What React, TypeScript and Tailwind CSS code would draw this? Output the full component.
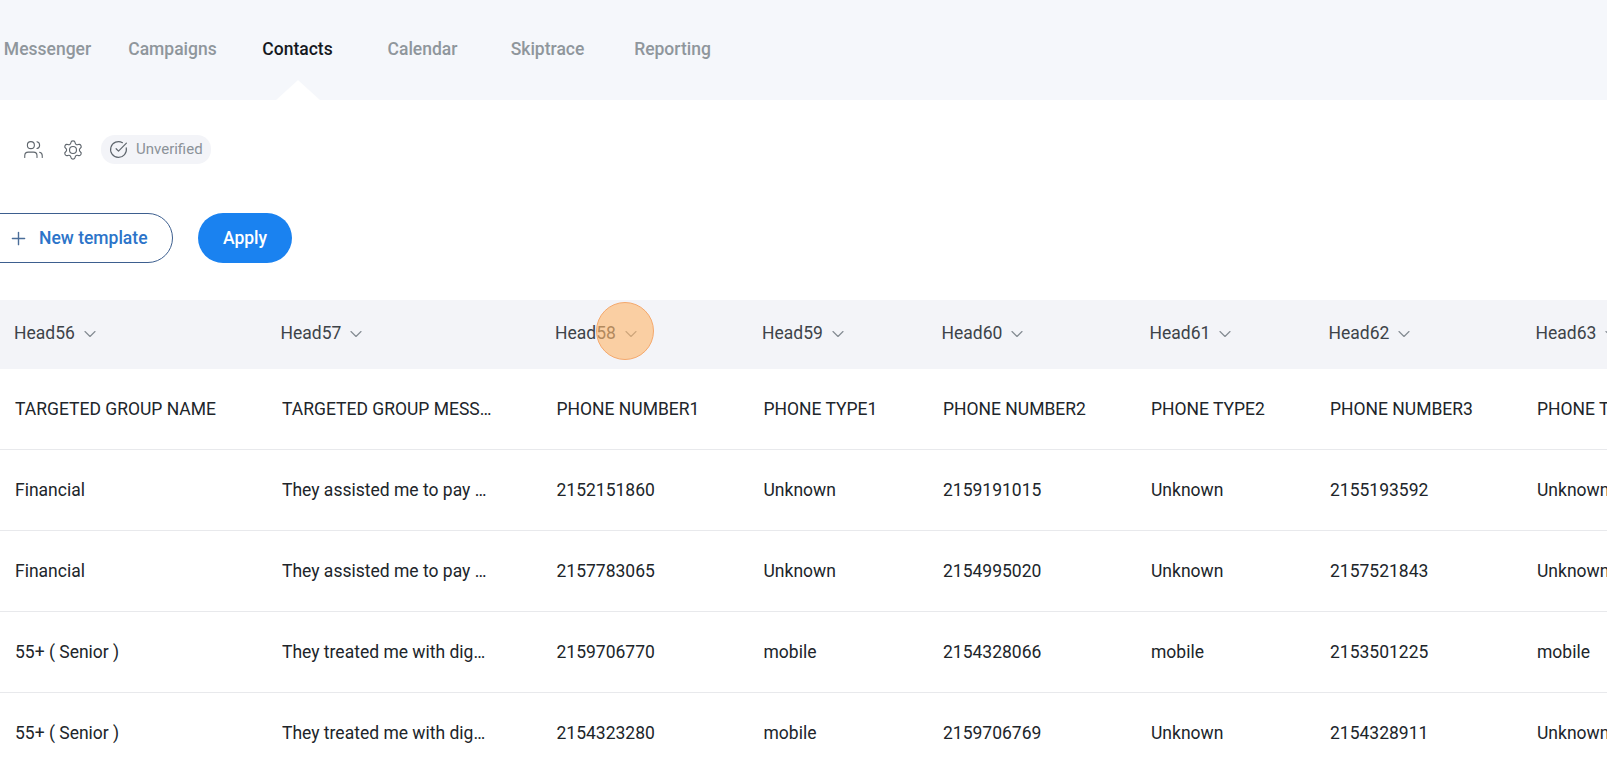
import { ChevronDown, CircleCheckBig, Plus, Users } from "lucide-react";

const navItems = ["Messenger", "Campaigns", "Contacts", "Calendar", "Skiptrace", "Reporting"];
const heads = ["Head56", "Head57", "Head58", "Head59", "Head60", "Head61", "Head62", "Head63"];
const rows = [
  ["TARGETED GROUP NAME", "TARGETED GROUP MESSAGE NAME", "PHONE NUMBER1", "PHONE TYPE1", "PHONE NUMBER2", "PHONE TYPE2", "PHONE NUMBER3", "PHONE TYPE3"],
  ["Financial", "They assisted me to pay off my debts", "2152151860", "Unknown", "2159191015", "Unknown", "2155193592", "Unknown"],
  ["Financial", "They assisted me to pay off my debts", "2157783065", "Unknown", "2154995020", "Unknown", "2157521843", "Unknown"],
  ["55+ ( Senior )", "They treated me with dignity and respect", "2159706770", "mobile", "2154328066", "mobile", "2153501225", "mobile"],
  ["55+ ( Senior )", "They treated me with dignity and respect", "2154323280", "mobile", "2159706769", "Unknown", "2154328911", "Unknown"],
];

function Gear() {
  return (
    <svg width="22" height="22" viewBox="0 0 24 24" fill="none" stroke="currentColor" strokeWidth="1.25" strokeLinecap="round" strokeLinejoin="round" className="ml-[18px]">
      <path d="M9.671 4.136a2.34 2.34 0 0 1 4.659 0 2.34 2.34 0 0 0 3.319 1.915 2.34 2.34 0 0 1 2.33 4.033 2.34 2.34 0 0 0 0 3.831 2.34 2.34 0 0 1-2.33 4.033 2.34 2.34 0 0 0-3.319 1.915 2.34 2.34 0 0 1-4.659 0 2.34 2.34 0 0 0-3.32-1.915 2.34 2.34 0 0 1-2.33-4.033 2.34 2.34 0 0 0 0-3.831A2.34 2.34 0 0 1 6.35 6.051a2.34 2.34 0 0 0 3.319-1.915" />
      <circle cx="12" cy="12" r="3.8" />
    </svg>
  );
}

export default function App() {
  return (
    <div className="h-[762px] overflow-hidden bg-white font-['Roboto',sans-serif] text-[17.5px]">
      <nav className="-ml-[15px] flex h-[100px] items-center bg-[#f5f7fb]">
        {navItems.map((item) => (
          <div key={item} className="relative flex h-full w-[125px] items-center justify-center pb-[2px]">
            <span className={item === "Contacts" ? "font-medium text-[#15191e]" : "font-medium text-[#8f969c]"}>{item}</span>
            {item === "Contacts" && (
              <span className="absolute bottom-0 left-1/2 h-0 w-0 -translate-x-1/2 border-x-[22px] border-b-[20px] border-x-transparent border-b-white" />
            )}
          </div>
        ))}
      </nav>

      <div className="mt-[32px] flex h-[35px] items-center pl-[23px] text-[#5f666d]">
        <Users size={21} strokeWidth={1.25} />
        <Gear />
        <div className="ml-[17px] flex h-[29px] w-[110px] items-center gap-[8px] rounded-[14px] bg-[#f3f4f8] pl-[8px] text-[15px] text-[#8b9298]">
          <CircleCheckBig size={19} strokeWidth={1.5} className="text-[#5f666d]" />
          <span>Unverified</span>
        </div>
      </div>

      <div className="mt-[46px] flex items-center">
        <button className="-ml-[28px] flex h-[50px] w-[201px] items-center rounded-[25px] border border-[#3d5f8f] bg-white pl-[35px] font-medium text-[#2c74c9]">
          <Plus size={21} strokeWidth={1.6} className="text-[#4a6d99]" />
          <span className="ml-[10px]">New template</span>
        </button>
        <button className="ml-[25px] h-[50px] w-[94px] rounded-[25px] bg-[#1a82f0] font-medium text-white">Apply</button>
      </div>

      <div className="relative mt-[37px]">
        <div className="grid h-[69px] grid-cols-[267px_274.5px_207px_179.5px_208px_179px_207px_1fr] items-center bg-[#f3f4f8] pb-[2px] text-[#3d4349]">
          {heads.map((h, i) => (
            <div key={h} className={i === 0 ? "flex items-center gap-[5px] whitespace-nowrap pl-[14px]" : "flex items-center gap-[5px] whitespace-nowrap pl-[13.5px]"}>
              <span>{h}</span>
              <ChevronDown size={20} strokeWidth={1.4} className="text-[#858c93]" />
            </div>
          ))}
        </div>
        <span className="absolute left-[596px] top-[2px] h-[58px] w-[58px] rounded-full border border-[#f4a86c] bg-[#ffb76b]/60" />
        {rows.map((r, i) => (
          <div
            key={i}
            className="grid h-[81px] grid-cols-[267px_274.5px_207px_179.5px_208px_179px_207px_1fr] items-center border-b border-[#e8e9ec] text-[#20252a]"
          >
            {r.map((c, j) => (
              <div key={j} className="overflow-hidden whitespace-nowrap pl-[15px]">
                {j === 1 ? <div className={i === 0 ? "w-[218px] truncate" : "w-[208px] truncate"}>{c}</div> : c}
              </div>
            ))}
          </div>
        ))}
      </div>
    </div>
  );
}
